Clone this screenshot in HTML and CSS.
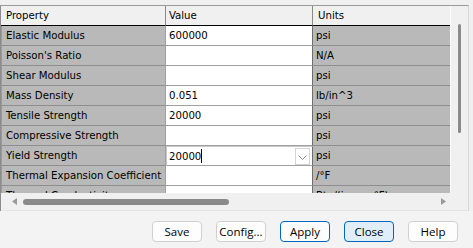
FILE: index.html
```html
<!DOCTYPE html>
<html>
<head>
<meta charset="utf-8">
<link rel="stylesheet" href="styles.css">
</head>
<body>
<div class="panel">
  <div class="viewport">
    <div class="grid">
      <div class="row head">
        <div class="cell">Property</div>
        <div class="cell">Value</div>
        <div class="cell">Units</div>
      </div>
      <div class="row"><div class="cell prop">Elastic Modulus</div><div class="cell val">600000</div><div class="cell unit">psi</div></div>
      <div class="row"><div class="cell prop">Poisson's Ratio</div><div class="cell val"></div><div class="cell unit">N/A</div></div>
      <div class="row"><div class="cell prop">Shear Modulus</div><div class="cell val"></div><div class="cell unit">psi</div></div>
      <div class="row"><div class="cell prop">Mass Density</div><div class="cell val">0.051</div><div class="cell unit">lb/in^3</div></div>
      <div class="row"><div class="cell prop">Tensile Strength</div><div class="cell val">20000</div><div class="cell unit">psi</div></div>
      <div class="row"><div class="cell prop">Compressive Strength</div><div class="cell val"></div><div class="cell unit">psi</div></div>
      <div class="row"><div class="cell prop">Yield Strength</div><div class="cell val editing"><span class="edit-text">20000<span class="caret"></span></span><span class="drop"><svg width="9" height="5" viewBox="0 0 9 5"><path d="M0.5 0.5 L4.5 4.5 L8.5 0.5" fill="none" stroke="#8a8a8a" stroke-width="1"/></svg></span></div><div class="cell unit">psi</div></div>
      <div class="row"><div class="cell prop">Thermal Expansion Coefficient</div><div class="cell val"></div><div class="cell unit">/°F</div></div>
      <div class="row"><div class="cell prop">Thermal Conductivity</div><div class="cell val"></div><div class="cell unit">Btu/(in sec °F)</div></div>
    </div>
    <div class="vscroll"><div class="vthumb"></div></div>
  </div>
  <div class="hscroll">
    <svg class="arrow" width="5" height="7" viewBox="0 0 5 7"><path d="M5 0 L0 3.5 L5 7 Z" fill="#9a9a9a"/></svg>
    <div class="htrack"><div class="hthumb"></div></div>
    <svg class="arrow" width="5" height="7" viewBox="0 0 5 7"><path d="M0 0 L5 3.5 L0 7 Z" fill="#9a9a9a"/></svg>
  </div>
</div>
<div class="footer">
  <button class="btn">Save</button>
  <button class="btn">Config...</button>
  <button class="btn primary">Apply</button>
  <button class="btn focus">Close</button>
  <button class="btn">Help</button>
</div>
</body>
</html>
```
FILE: styles.css
```css
html, body {
  margin: 0;
  padding: 0;
}
body {
  width: 473px;
  height: 248px;
  background: #f0f0f0;
  overflow: hidden;
  font-family: "DejaVu Sans Condensed", "DejaVu Sans", sans-serif;
  font-stretch: condensed;
  font-size: 11.3px;
  color: #000;
}
.panel {
  margin-top: 5px;
  width: 467px;
  height: 205px;
  border-top: 1px solid #9a9a9a;
  border-left: 1px solid #8c8c8c;
  border-right: 1px solid #d6d6d6;
  display: flex;
  flex-direction: column;
  background: #f0f0f0;
}
.viewport {
  height: 187px;
  display: flex;
  overflow: hidden;
}
.grid {
  width: 449px;
  display: flex;
  flex-direction: column;
  flex: none;
}
.row {
  display: grid;
  grid-template-columns: 165px 147px 137px;
  height: 20px;
  flex: none;
}
.cell {
  box-sizing: border-box;
  height: 20px;
  line-height: 19px;
  border-bottom: 1px solid #8e8e8e;
  border-right: 1px solid #9c9c9c;
  white-space: nowrap;
  overflow: hidden;
  padding-left: 3px;
}
.head .cell {
  background: #f0f0f0;
  border-bottom: 1px solid #000;
  border-right: 1px solid #8a8a8a;
  padding-left: 5px;
}
.head .cell:nth-child(2) { padding-left: 3px; }
.head .cell:last-child { border-right: none; }
.prop {
  background: #b9b9b9;
  padding-left: 4px;
  border-left: 1px solid #9a9a9a;
  border-right: 1px solid #a0a0a0;
}
.val {
  background: #fff;
  border-bottom: 1px solid #a0a0a0;
  border-right: 1px solid #6e6e6e;
  color: #000;
}
.unit {
  background: #b9b9b9;
  border-right: none;
  padding-left: 3px;
}
.editing {
  display: flex;
  align-items: center;
  justify-content: space-between;
  padding-right: 2px;
  border: 1px solid #c8c8c8;
  border-right: 1px solid #6e6e6e;
  border-bottom: 1px solid #a0a0a0;
  padding-left: 2px;
}
.edit-text {
  display: flex;
  align-items: center;
}
.caret {
  display: inline-block;
  width: 1px;
  height: 14px;
  background: #000;
}
.drop {
  box-sizing: border-box;
  width: 15px;
  height: 17px;
  border: 1px solid #d4d4d4;
  background: #fff;
  display: flex;
  align-items: center;
  justify-content: center;
  padding-top: 3px;
}
.vscroll {
  flex: 1;
  border-left: 1px solid #fbfbfb;
  background: #f0f0f0;
}
.vthumb {
  margin-top: 18px;
  margin-left: 7px;
  width: 3px;
  height: 109px;
  border-radius: 2px;
  background: #8a8a8a;
}
.hscroll {
  height: 17px;
  display: flex;
  align-items: center;
  padding: 0 22px 0 11px;
  gap: 6px;
  background: #f0f0f0;
  border-bottom: 1px solid #e4e4e4;
}
.htrack {
  flex: 1;
}
.hthumb {
  width: 206px;
  height: 6px;
  border-radius: 3px;
  background: #8a8a8a;
}
.arrow {
  flex: none;
}
.footer {
  height: 37px;
  background: #f3f3f3;
  display: flex;
  justify-content: flex-end;
  align-items: flex-start;
  gap: 14px;
  padding: 10px 15px 0 0;
  box-sizing: border-box;
}
.btn {
  box-sizing: border-box;
  width: 50px;
  height: 21px;
  padding: 0;
  border: 1px solid #d0d0d0;
  border-radius: 4px;
  background: #fdfdfd;
  font-family: "Open Sans", "Noto Sans", sans-serif;
  font-size: 11.5px;
  line-height: 18px;
  color: #000;
}
.primary {
  border-color: #0067c0;
}
.focus {
  border-color: #0067c0;
  background: #e0eef9;
}
```
